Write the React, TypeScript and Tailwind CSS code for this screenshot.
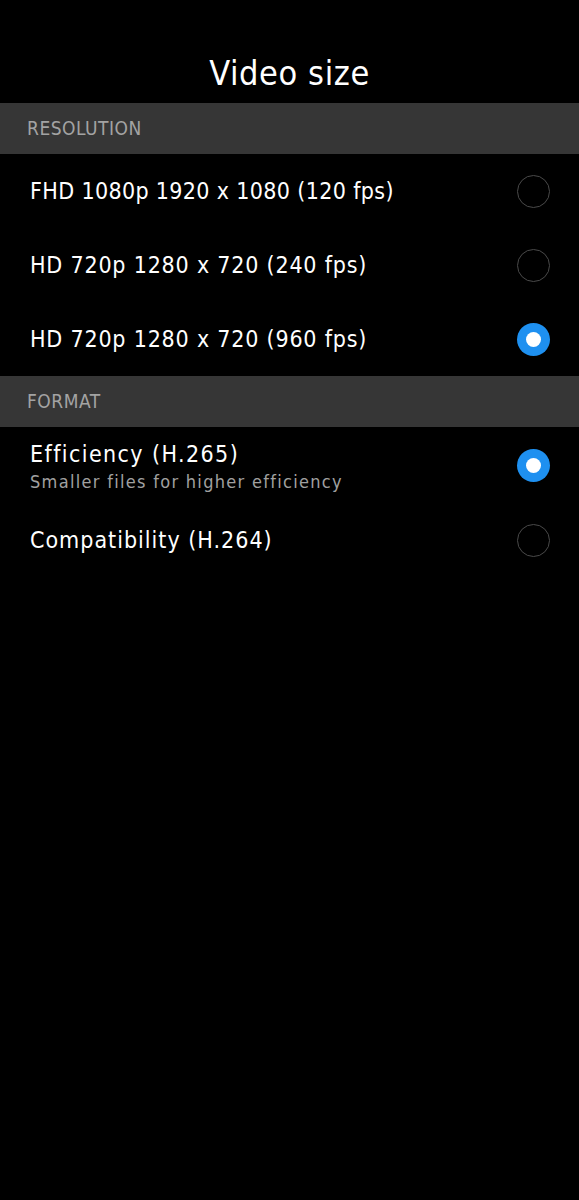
import React, { useState } from 'react';

const font = { fontFamily: '"DejaVu Sans Condensed", "DejaVu Sans", sans-serif' };

function Radio({ checked }: { checked: boolean }) {
  if (checked) {
    return (
      <span className="w-[33px] h-[33px] rounded-full bg-[#1e90f0] flex items-center justify-center shrink-0">
        <span className="w-[15px] h-[15px] rounded-full bg-white" />
      </span>
    );
  }
  return <span className="w-[33px] h-[33px] rounded-full border-[1.5px] border-[#4a4a4a] shrink-0" />;
}

function SectionHeader({ label }: { label: string }) {
  return (
    <div className="h-[51px] bg-[#363636] flex items-center px-[27px] text-[19px] text-[#a3a3a3] tracking-[0.5px]">
      {label}
    </div>
  );
}

function Row({ title, tracking, checked, onClick }: { title: string; tracking: string; checked: boolean; onClick: () => void }) {
  return (
    <button onClick={onClick} className="w-full h-[74px] flex items-center justify-between pl-[30px] pr-[29px] text-left">
      <span className={`text-[23px] text-white leading-[28px] ${tracking}`}>{title}</span>
      <Radio checked={checked} />
    </button>
  );
}

export default function App() {
  const [res, setRes] = useState(2);
  const [fmt, setFmt] = useState(0);

  const resolutions = [
    { label: 'FHD 1080p 1920 x 1080 (120 fps)', tracking: 'tracking-[0.35px]' },
    { label: 'HD 720p 1280 x 720 (240 fps)', tracking: 'tracking-[0.8px]' },
    { label: 'HD 720p 1280 x 720 (960 fps)', tracking: 'tracking-[0.8px]' },
  ];

  return (
    <div className="w-[579px] h-[1200px] bg-black text-white" style={font}>
      <div className="h-[103px] flex items-end justify-center pb-[10px]">
        <h1 className="text-[34px] leading-[40px] tracking-[0.6px]">Video size</h1>
      </div>
      <SectionHeader label="RESOLUTION" />
      {resolutions.map((r, i) => (
        <Row key={r.label} title={r.label} tracking={r.tracking} checked={res === i} onClick={() => setRes(i)} />
      ))}
      <SectionHeader label="FORMAT" />
      <div className="h-[76px]">
        <button onClick={() => setFmt(0)} className="w-full h-full flex items-center justify-between pl-[30px] pr-[29px] text-left">
          <div className="flex flex-col pt-[3px]">
            <span className="text-[23px] text-white leading-[28px] tracking-[1.4px]">Efficiency (H.265)</span>
            <span className="text-[18px] text-[#a0a0a0] leading-[22px] mt-[3px] tracking-[1.3px]">Smaller files for higher efficiency</span>
          </div>
          <Radio checked={fmt === 0} />
        </button>
      </div>
      <Row title="Compatibility (H.264)" tracking="tracking-[1px]" checked={fmt === 1} onClick={() => setFmt(1)} />
    </div>
  );
}
